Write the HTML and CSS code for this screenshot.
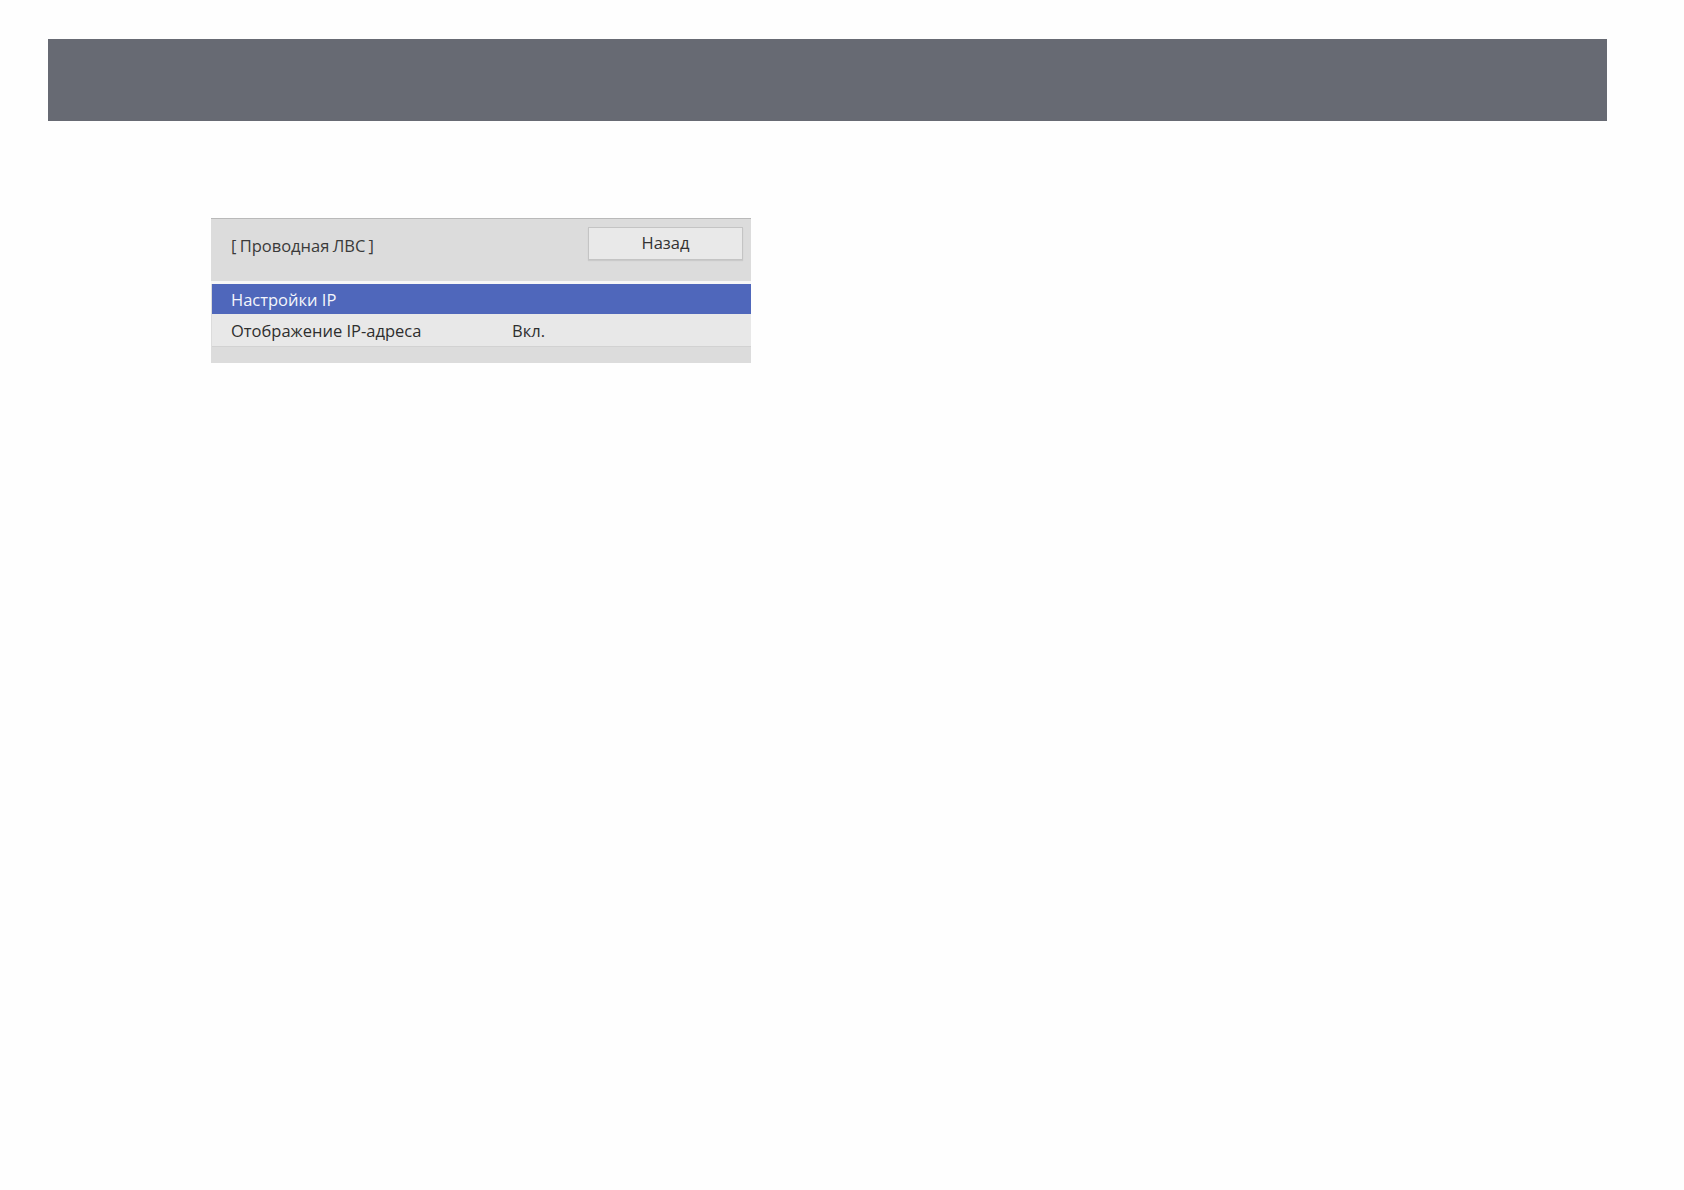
FILE: index.html
```html
<!DOCTYPE html>
<html lang="ru">
<head>
<meta charset="utf-8">
<title>Проводная ЛВС</title>
<link rel="stylesheet" href="styles.css">
</head>
<body>
<div class="topbar"></div>
<div class="panel">
  <div class="panel-head">
    <div class="panel-title">[ Проводная ЛВС ]</div>
    <div class="btn">Назад</div>
  </div>
  <div class="sep"></div>
  <div class="row row-active"><span class="label">Настройки IP</span></div>
  <div class="row"><span class="label">Отображение IP-адреса</span><span class="value">Вкл.</span></div>
  <div class="panel-foot"></div>
</div>
</body>
</html>
```
FILE: styles.css
```css
html, body {
  margin: 0;
  padding: 0;
  background: #fefefe;
  font-family: "Open Sans", "Noto Sans", "DejaVu Sans", sans-serif;
}
.topbar {
  margin: 39px 77px 0 48px;
  height: 82px;
  background: #676a73;
}
.panel {
  margin: 97px 0 0 211px;
  width: 540px;
  background: #dcdcdc;
  border-top: 1px solid #b9b9b9;
}
.panel-head {
  height: 62px;
  display: flex;
  align-items: flex-start;
  justify-content: space-between;
  padding: 0 8px 0 20px;
  box-sizing: border-box;
}
.panel-title {
  margin-top: 15px;
  font-size: 16.5px;
  color: #3a3a3a;
  word-spacing: -1px;
}
.btn {
  margin-top: 8px;
  width: 155px;
  height: 33px;
  box-sizing: border-box;
  background: #e9e9e9;
  border: 1px solid #c4c4c4;
  box-shadow: 0 1px 1px rgba(0,0,0,0.08);
  display: flex;
  align-items: center;
  justify-content: center;
  font-size: 16.5px;
  color: #333;
  padding-bottom: 3px;
}
.sep {
  height: 3px;
  background: #f6f6f6;
}
.row {
  height: 33px;
  display: flex;
  align-items: center;
  padding-left: 19px;
  background: #e8e8e8;
  border-bottom: 1px solid #d2d2d2;
  font-size: 16.5px;
  color: #2e2e2e;
  box-sizing: border-box;
  margin-left: 1px;
}
.row-active {
  height: 30px;
  background: #4f67bb;
  color: #f4f6fc;
  border-bottom: none;
}
.label {
  width: 281px;
}
.panel-foot {
  height: 16px;
  background: #dcdcdc;
}
```
